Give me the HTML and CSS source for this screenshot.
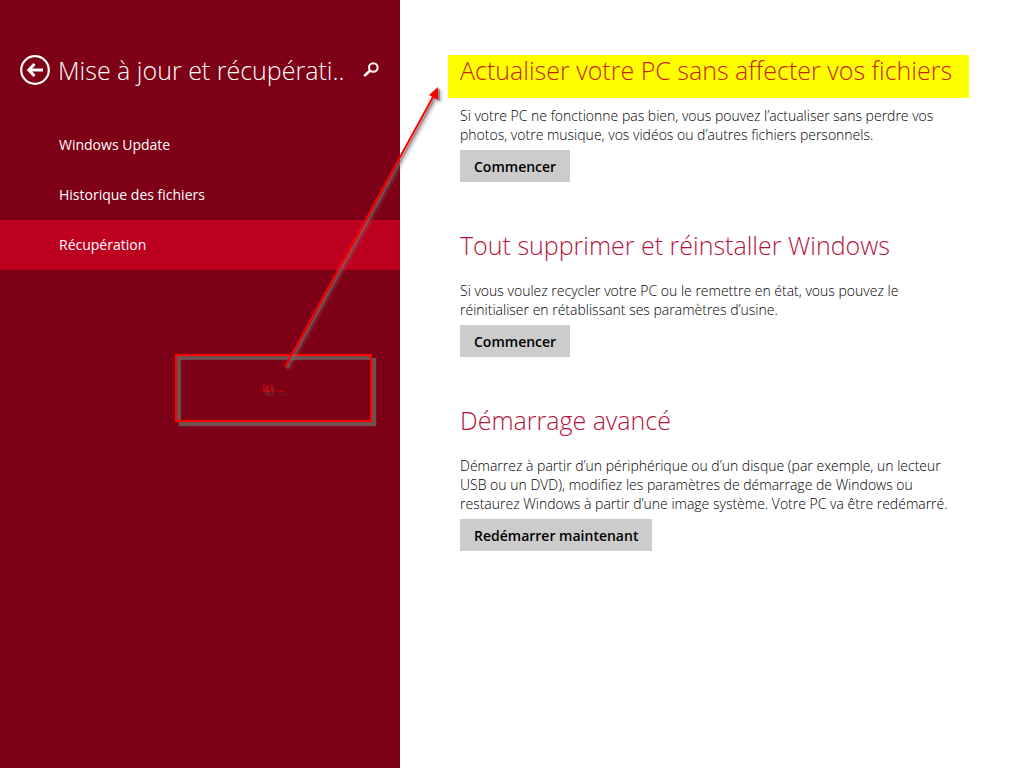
FILE: index.html
```html
<!DOCTYPE html>
<html lang="fr">
<head>
  <meta charset="UTF-8">
  <meta name="viewport" content="width=device-width, initial-scale=1.0">
  <title>Mise à jour et récupération</title>
  <link rel="stylesheet" href="styles.css">
</head>
<body>
  <aside class="sidebar">
    <header class="sidebar-header">
      <button class="icon-btn" type="button" aria-label="Retour">
        <svg width="30" height="30" viewBox="0 0 30 30" fill="none" stroke="#fff">
          <circle cx="15" cy="15" r="13.8" stroke-width="2.2"/>
          <path d="M9 15h14" stroke-width="3"/>
          <path d="M14.5 9L8.8 15l5.7 6" stroke-width="3"/>
        </svg>
      </button>
      <h1>Mise à jour et récupérati..</h1>
      <button class="icon-btn search-btn" type="button" aria-label="Rechercher">
        <svg width="16" height="16" viewBox="0 0 16 16" fill="none" stroke="#fff">
          <circle cx="10.3" cy="5.5" r="4.3" stroke-width="2"/>
          <path d="M7 8.7L1.2 14" stroke-width="2.6"/>
        </svg>
      </button>
    </header>
    <nav class="menu">
      <a href="#">Windows Update</a>
      <a href="#">Historique des fichiers</a>
      <a href="#" class="active">Récupération</a>
    </nav>
  </aside>

  <main class="content">
    <section>
      <h2 class="highlight">Actualiser votre PC sans affecter vos fichiers</h2>
      <p>Si votre PC ne fonctionne pas bien, vous pouvez l’actualiser sans perdre vos<br>
        photos, votre musique, vos vidéos ou d’autres fichiers personnels.</p>
      <button class="action" type="button">Commencer</button>
    </section>
    <section>
      <h2>Tout supprimer et réinstaller Windows</h2>
      <p>Si vous voulez recycler votre PC ou le remettre en état, vous pouvez le<br>
        réinitialiser en rétablissant ses paramètres d’usine.</p>
      <button class="action" type="button">Commencer</button>
    </section>
    <section>
      <h2>Démarrage avancé</h2>
      <p>Démarrez à partir d’un périphérique ou d’un disque (par exemple, un lecteur<br>
        USB ou un DVD), modifiez les paramètres de démarrage de Windows ou<br>
        restaurez Windows à partir d’une image système. Votre PC va être redémarré.</p>
      <button class="action" type="button">Redémarrer maintenant</button>
    </section>
  </main>

  <!-- Annotation drawn over the page -->
  <div class="callout">ici ...</div>
  <svg class="arrow" width="170" height="300" viewBox="0 0 170 300">
    <path d="M5 286L153 16" stroke="#f00" stroke-width="2"/>
    <path d="M158 6L158 19L149 14Z" fill="#f00"/>
  </svg>
</body>
</html>
```

FILE: styles.css
```css
* {
  box-sizing: border-box;
}

body {
  margin: 0;
  min-height: 100vh;
  display: flex;
  position: relative;
  background-color: #fff;
  font-family: "Open Sans", "Noto Sans", sans-serif;
  font-size: 14px;
}

h1, h2, p {
  margin: 0;
}

h1, h2 {
  font-size: 25px;
  font-weight: 300;
  white-space: nowrap;
}

.sidebar {
  flex: 0 0 400px;
  padding-top: 50px;
  background-color: #7e0016;
  color: #fff;
}

.sidebar-header {
  display: flex;
  align-items: center;
  height: 40px;
  padding: 0 21px 0 20px;
  gap: 8px;
}

.icon-btn {
  display: flex;
  padding: 0;
  border: 0;
  background: none;
  cursor: pointer;
}

.search-btn {
  margin-left: auto;
}

.menu {
  margin-top: 30px;
}

.menu a {
  display: block;
  padding-left: 59px;
  line-height: 50px;
  color: #fff;
  text-decoration: none;
}

.menu .active {
  background-color: #be0020;
}

.content {
  flex: 1;
  display: flex;
  flex-direction: column;
  gap: 48px;
  padding: 55px 55px 55px 48px;
}

.content section {
  padding-left: 12px;
}

h2 {
  margin: 0 0 8px -12px;
  padding: 0 12px 12px;
  line-height: 31px;
  color: #b4143c;
}

.highlight {
  background-color: #ff0;
  color: #c81e0a;
}

p {
  font-weight: 300;
  line-height: 19px;
  color: #000;
  white-space: nowrap;
}

.action {
  display: block;
  height: 32px;
  margin-top: 6px;
  padding: 0 14px;
  border: 0;
  background-color: #ccc;
  color: #000;
  font-family: inherit;
  font-size: 14px;
  font-weight: 600;
  cursor: pointer;
}

/* Annotation */
.callout {
  position: absolute;
  left: 175px;
  top: 354px;
  width: 197px;
  height: 68px;
  border: 2px solid #f00;
  color: #f00;
  font-size: 11px;
  line-height: 64px;
  text-align: center;
  text-shadow: 2px 3px 2px #705050;
  box-shadow: 4px 4px 1px #705050, inset 4px 4px 1px #705050;
}

.arrow {
  position: absolute;
  left: 280px;
  top: 81px;
  filter: drop-shadow(2px 1px 0 rgba(120, 110, 110, 0.6)) drop-shadow(2px 2px 1px rgba(120, 110, 110, 0.5));
  pointer-events: none;
}
```
